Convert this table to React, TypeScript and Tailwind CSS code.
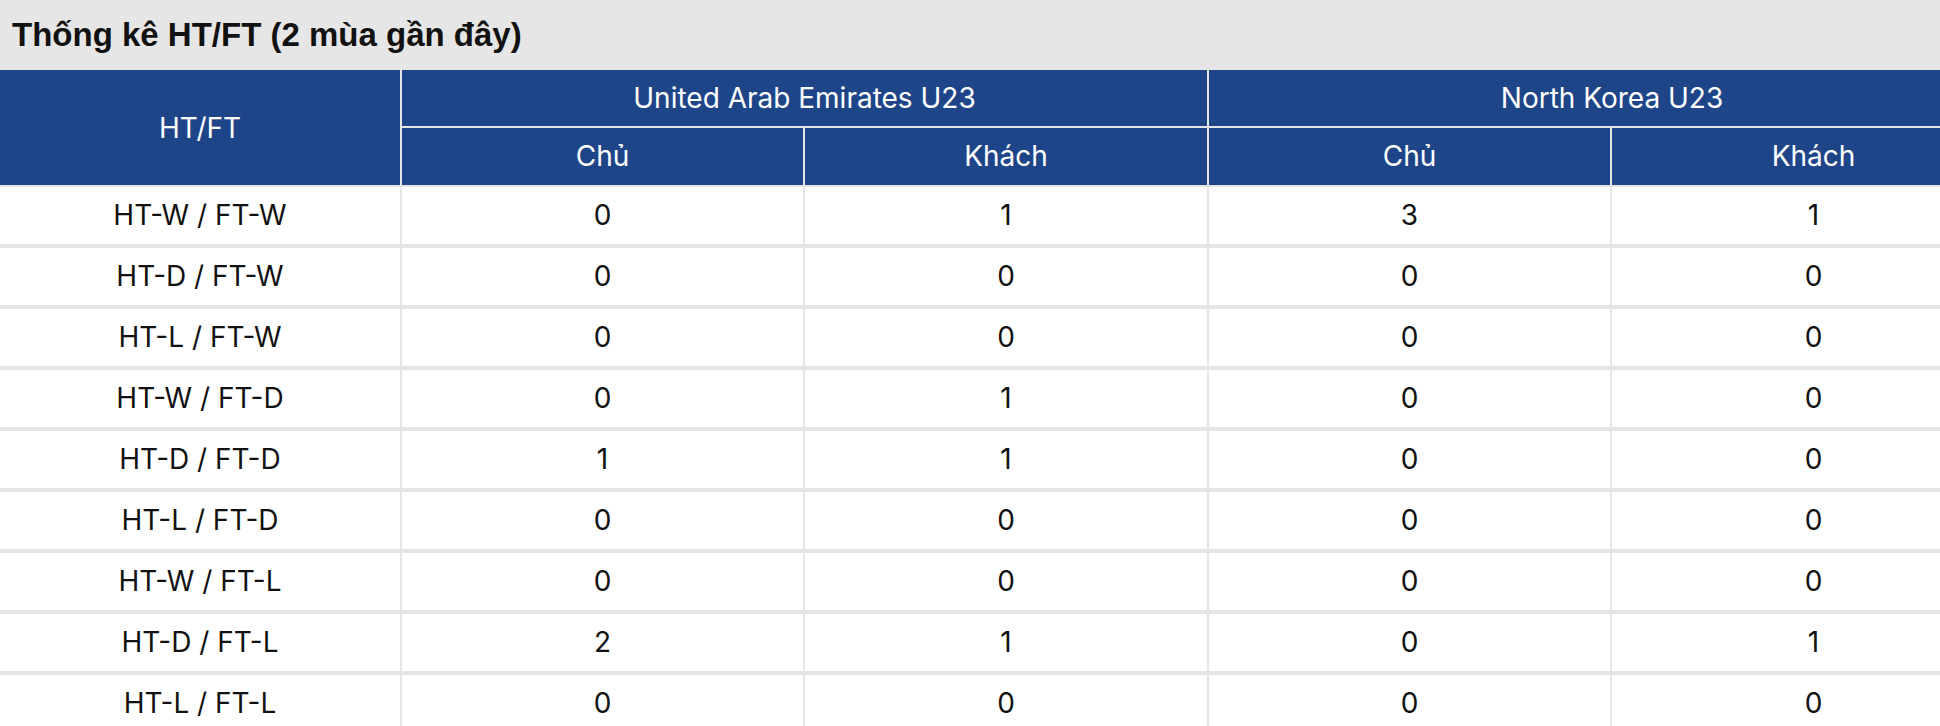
const rows: [string, number, number, number, number][] = [
  ['HT-W / FT-W', 0, 1, 3, 1],
  ['HT-D / FT-W', 0, 0, 0, 0],
  ['HT-L / FT-W', 0, 0, 0, 0],
  ['HT-W / FT-D', 0, 1, 0, 0],
  ['HT-D / FT-D', 1, 1, 0, 0],
  ['HT-L / FT-D', 0, 0, 0, 0],
  ['HT-W / FT-L', 0, 0, 0, 0],
  ['HT-D / FT-L', 2, 1, 0, 1],
  ['HT-L / FT-L', 0, 0, 0, 0],
]

const widths = ['w-[402px]', 'w-[403px]', 'w-[404px]', 'w-[403px]', 'w-[403px]']

export default function App() {
  return (
    <div className="h-[726px] w-[1940px] overflow-hidden bg-white font-['Inter',sans-serif]">
      <div className="flex h-[70px] items-center bg-[#e6e6e6] px-3">
        <h2 className="font-['Liberation_Sans',Arial,sans-serif] text-[33px] font-bold text-[#111]">
          Thống kê HT/FT (2 mùa gần đây)
        </h2>
      </div>

      <div className="w-[2015px]">
        {/* header */}
        <div className="flex bg-[#1f4589] text-[28px] text-white">
          <div className="flex h-[117px] w-[402px] shrink-0 items-center justify-center border-r-2 border-b-2 border-[#e5e5e5]">
            HT/FT
          </div>
          <TeamHead name="United Arab Emirates U23" className="w-[807px] border-r-2" />
          <TeamHead name="North Korea U23" className="w-[806px]" />
        </div>

        {/* body */}
        {rows.map(([label, ...vals]) => (
          <div key={label} className="flex h-[61px] border-b-4 border-[#e5e5e5] text-[28px] text-[#111]">
            {[label, ...vals].map((v, i) => (
              <div
                key={i}
                className={`${widths[i]} flex shrink-0 items-center justify-center pb-px ${
                  i < 4 ? 'border-r-2 border-[#e5e5e5]' : ''
                }`}
              >
                {v}
              </div>
            ))}
          </div>
        ))}
      </div>
    </div>
  )
}

function TeamHead({name, className}: {name: string; className: string}) {
  return (
    <div className={`flex shrink-0 flex-col border-[#e5e5e5] ${className}`}>
      <div className="flex h-[58px] items-center justify-center border-b-2 border-[#e5e5e5] pb-px">
        {name}
      </div>
      <div className="flex h-[59px] border-b-2 border-[#e5e5e5]">
        <div className="flex w-[403px] items-center justify-center border-r-2 border-[#e5e5e5] pb-px">
          Chủ
        </div>
        <div className="flex flex-1 items-center justify-center pb-px">Khách</div>
      </div>
    </div>
  )
}
